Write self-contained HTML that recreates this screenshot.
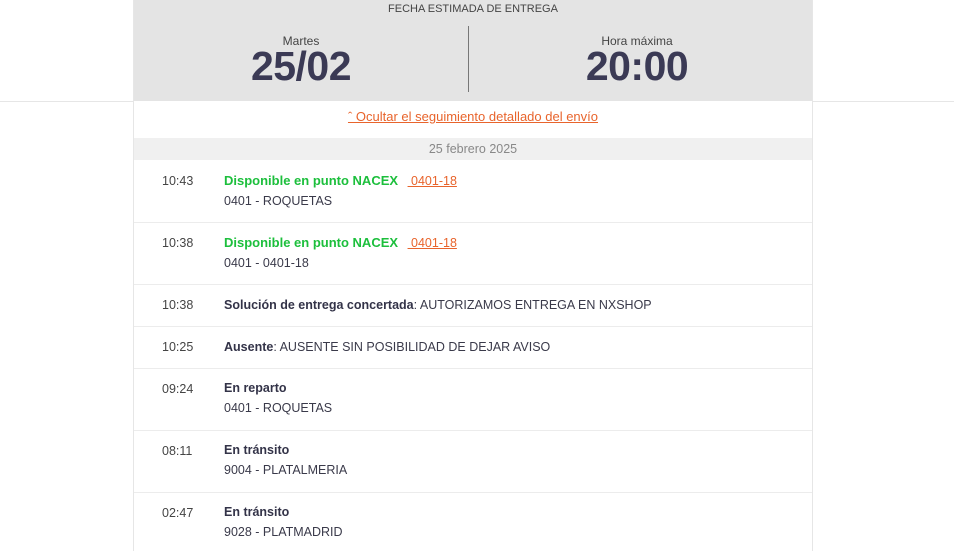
<!DOCTYPE html>
<html><head><style>
*{margin:0;padding:0;box-sizing:border-box}
body{width:954px;height:551px;overflow:hidden;background:#fff;font-family:"Liberation Sans",sans-serif;color:#3a3a4a;position:relative}
.hl{position:absolute;left:0;right:0;top:101px;height:1px;background:#e6e6e6}
.wrap{position:absolute;left:133px;width:680px;top:0;height:551px;border-left:1px solid #e6e6e6;border-right:1px solid #e6e6e6;background:#fff}
.head{height:101px;background:#e4e4e4;position:relative}
.t{position:absolute;top:3px;width:100%;text-align:center;font-size:11px;color:#444}
.col{position:absolute;top:34px;text-align:center;width:200px}
.col .s{font-size:12px;color:#444}
.col .b{font-size:41px;font-weight:bold;color:#3b3a55;line-height:36px;letter-spacing:-0.5px}
.div{position:absolute;left:334px;top:26px;width:1px;height:66px;background:#777}
.link{position:absolute;top:109px;width:100%;text-align:center;font-size:13px;color:#e8642c;text-decoration:underline}
.date{position:absolute;top:138px;left:0;right:0;height:22px;background:#f0f0f0;text-align:center;font-size:12.5px;color:#888;line-height:22px}
.row{position:absolute;left:0;right:0;border-bottom:1px solid #ececec;font-size:12.5px}
.row .tm{position:absolute;left:28px;top:13px;color:#444}
.row .tx{position:absolute;left:90px;top:10px;line-height:20px;color:#3a3a4a}
.g{color:#1cbf3c;font-weight:bold;font-size:13px}
.o{color:#e8642c;text-decoration:underline;margin-left:6px}
b{color:#333348}
</style></head><body>
<div class="hl"></div>
<div class="wrap">
<div class="head">
<div class="t">FECHA ESTIMADA DE ENTREGA</div>
<div class="col" style="left:67px"><div class="s">Martes</div><div class="b">25/02</div></div>
<div class="div"></div>
<div class="col" style="left:403px"><div class="s">Hora máxima</div><div class="b">20:00</div></div>
</div>
<div class="link">ˆ Ocultar el seguimiento detallado del envío</div>
<div class="date">25 febrero 2025</div>
<div class="row" style="top:161px;height:62px"><span class="tm">10:43</span><div class="tx"><span class="g">Disponible en punto NACEX</span> <span class="o">&nbsp;0401-18</span><br>0401 - ROQUETAS</div></div>
<div class="row" style="top:223px;height:62px"><span class="tm">10:38</span><div class="tx"><span class="g">Disponible en punto NACEX</span> <span class="o">&nbsp;0401-18</span><br>0401 - 0401-18</div></div>
<div class="row" style="top:285px;height:42px"><span class="tm">10:38</span><div class="tx" style="top:10px"><b>Solución de entrega concertada</b>: AUTORIZAMOS ENTREGA EN NXSHOP</div></div>
<div class="row" style="top:327px;height:42px"><span class="tm">10:25</span><div class="tx" style="top:10px"><b>Ausente</b>: AUSENTE SIN POSIBILIDAD DE DEJAR AVISO</div></div>
<div class="row" style="top:369px;height:62px"><span class="tm">09:24</span><div class="tx" style="top:9px"><b>En reparto</b><br>0401 - ROQUETAS</div></div>
<div class="row" style="top:431px;height:62px"><span class="tm">08:11</span><div class="tx" style="top:9px"><b>En tránsito</b><br>9004 - PLATALMERIA</div></div>
<div class="row" style="top:493px;height:62px;border:none"><span class="tm">02:47</span><div class="tx" style="top:9px"><b>En tránsito</b><br>9028 - PLATMADRID</div></div>
</div>
</body></html>
